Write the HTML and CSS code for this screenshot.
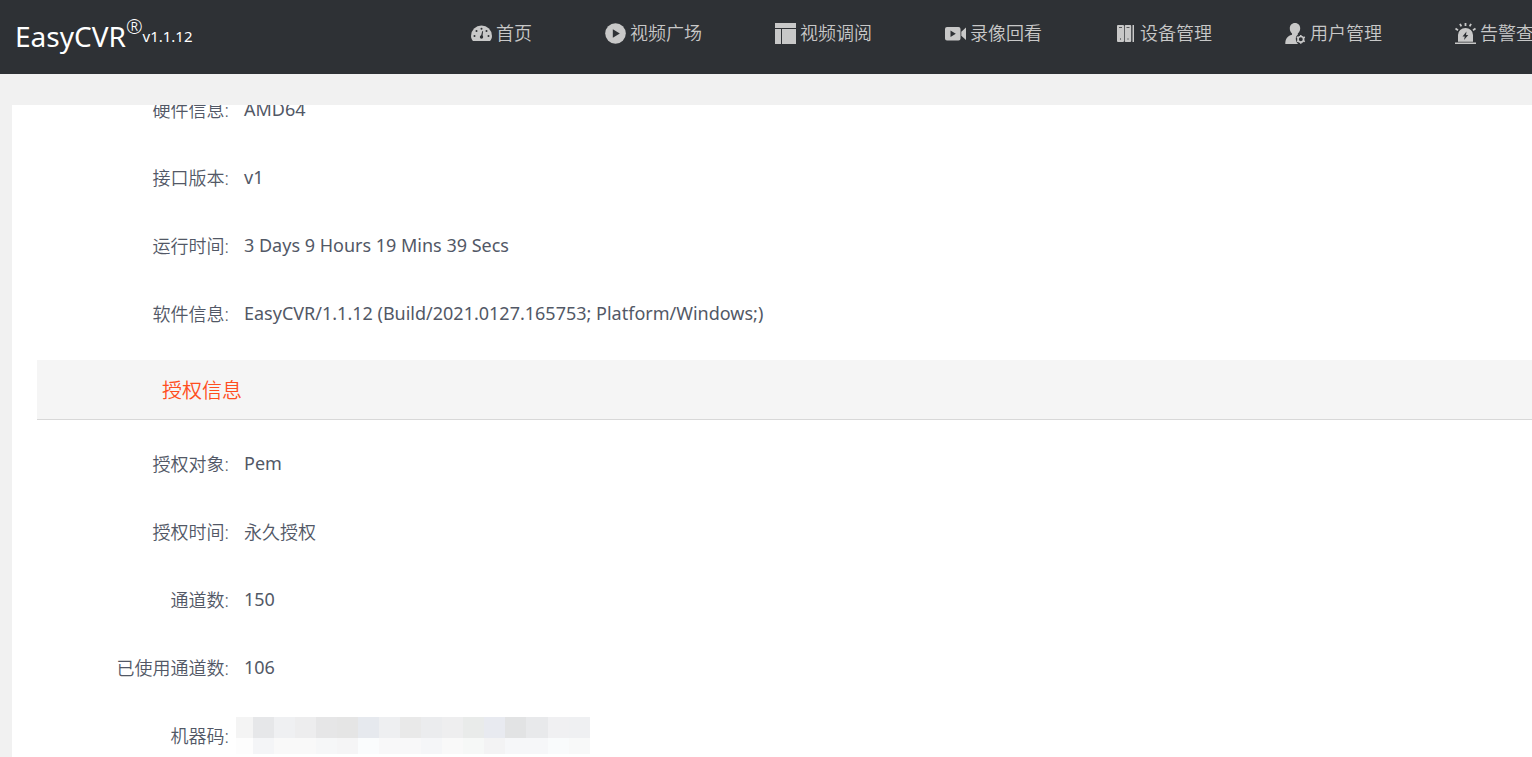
FILE: index.html
```html
<!DOCTYPE html>
<html lang="zh-CN">
<head>
<meta charset="utf-8">
<title>EasyCVR</title>
<link rel="stylesheet" href="styles.css">
</head>
<body>
<header class="topbar">
  <a class="logo" href="#"><span class="logo-name">EasyCVR</span><span class="logo-mark">®</span><span class="logo-version">v1.1.12</span></a>
  <nav class="nav">
    <a class="nav-item" href="#">
      <svg class="icon" viewBox="0 0 21 21"><path fill="currentColor" d="M2 18C.8 16.700 0 15 0 13a10.500 10.500 0 0 1 21 0c0 2-.8 3.700-2 5z"/><g fill="#2e3135"><circle cx="3.500" cy="13" r="1"/><circle cx="5.500" cy="8" r="1"/><circle cx="10.500" cy="5.800" r="1"/><circle cx="15.500" cy="8" r="1"/><circle cx="17.500" cy="13" r="1"/><circle cx="10.500" cy="14" r="1.700"/><path d="M10 13l1.300-5 .8.200-.6 5z"/></g></svg>
      <span>首页</span></a>
    <a class="nav-item" href="#">
      <svg class="icon" viewBox="0 0 21 21"><circle cx="10.500" cy="10.500" r="10.300" fill="currentColor"/><path fill="#2e3135" d="M7.800 6.300v8.400l7-4.200z"/></svg>
      <span>视频广场</span></a>
    <a class="nav-item" href="#">
      <svg class="icon" viewBox="0 0 21 21"><path fill="currentColor" d="M0 0h21v5H0zM0 6h6v15H0zM7 6h14v15H7z"/></svg>
      <span>视频调阅</span></a>
    <a class="nav-item" href="#">
      <svg class="icon" viewBox="0 0 21 21"><path fill="currentColor" d="M2 4h11.500a2 2 0 0 1 2 2v9.500a2 2 0 0 1-2 2H2a2 2 0 0 1-2-2V6a2 2 0 0 1 2-2zM16.300 8.800L21 4.500v12.500l-4.700-4.300z"/><path fill="#2e3135" d="M5.500 7.500v6.500l5.300-3.200z"/></svg>
      <span>录像回看</span></a>
    <a class="nav-item" href="#">
      <svg class="icon" viewBox="0 0 21 21"><path fill="currentColor" d="M2 3a1 1 0 0 1 1-1h5a1 1 0 0 1 1 1v15a1 1 0 0 1-1 1H3a1 1 0 0 1-1-1zM9.700 3a1 1 0 0 1 1-1h4.500a1 1 0 0 1 1 1v15a1 1 0 0 1-1 1h-4.500a1 1 0 0 1-1-1zM17.500 2H19v17h-1.500z"/><path fill="#2e3135" d="M4 4h3v.8H4zM11.500 4h3v.8h-3zM5 15.500h1v1H5zM12.500 15.500h1v1h-1z"/></svg>
      <span>设备管理</span></a>
    <a class="nav-item" href="#">
      <svg class="icon" viewBox="0 0 21 21"><path fill="currentColor" d="M10 0c3.200 0 5.200 2.300 5.200 5.300 0 2.300-1 4.200-2.400 5.200v1.200c-1.300 1-2 2.200-2 4 0 2.300.8 3.800 2.400 5.300H.3c0-5 1.800-7.800 6.700-9.200v-1.300C5.600 9.500 4.800 7.600 4.800 5.300 4.800 2.300 6.800 0 10 0z"/><circle cx="15.800" cy="16.300" r="2.800" fill="none" stroke="currentColor" stroke-width="1.700"/><path stroke="currentColor" stroke-width="1.500" d="M15.800 11.900v1.500M15.800 19.300v1.500M11.900 14l1.300.8M18.500 17.800l1.300.8M11.900 18.600l1.300-.8M18.500 14.800l1.300-.8"/></svg>
      <span>用户管理</span></a>
    <a class="nav-item" href="#">
      <svg class="icon" viewBox="0 0 21 21"><path fill="currentColor" d="M0 19.500h21V21H0zM3 18.700V12a7.500 7 0 0 1 15 0v6.700z"/><path fill="#2e3135" d="M11.500 8.500l-4 5h2.300l-.8 3.500 4.300-5H11z"/><path stroke="currentColor" stroke-width="1.800" d="M10.500 0v3M5 .8l1.300 2.600M16 .8l-1.300 2.600M.5 5.500l2.500 1.700M20.500 5.500L18 7.200"/></svg>
      <span>告警查询</span></a>
  </nav>
</header>
<main class="panel">
  <dl class="info info-scrolled">
    <div class="row"><dt>硬件信息:</dt><dd>AMD64</dd></div>
    <div class="row"><dt>接口版本:</dt><dd>v1</dd></div>
    <div class="row"><dt>运行时间:</dt><dd>3 Days 9 Hours 19 Mins 39 Secs</dd></div>
    <div class="row"><dt>软件信息:</dt><dd>EasyCVR/1.1.12 (Build/2021.0127.165753; Platform/Windows;)</dd></div>
  </dl>
  <h2 class="section-title">授权信息</h2>
  <dl class="info">
    <div class="row"><dt>授权对象:</dt><dd>Pem</dd></div>
    <div class="row"><dt>授权时间:</dt><dd class="han">永久授权</dd></div>
    <div class="row"><dt>通道数:</dt><dd>150</dd></div>
    <div class="row"><dt>已使用通道数:</dt><dd>106</dd></div>
    <div class="row"><dt>机器码:</dt><dd class="masked">
      <svg class="mosaic" viewBox="0 0 354 37" shape-rendering="crispEdges" aria-hidden="true">
        <path fill="#f4f4f4" d="M0 0h17v21H0z"/><path fill="#e6e7e9" d="M17 0h21v21H17z"/><path fill="#eff0f2" d="M38 0h21v21H38z"/><path fill="#ededee" d="M59 0h21v21H59z"/><path fill="#e6e6e7" d="M80 0h21v21H80z"/><path fill="#e5e5e5" d="M101 0h21v21h-21z"/><path fill="#e6e9ee" d="M122 0h21v21h-21z"/><path fill="#eeeff1" d="M143 0h21v21h-21z"/><path fill="#e9e9e9" d="M164 0h21v21h-21z"/><path fill="#ebecee" d="M185 0h21v21h-21z"/><path fill="#eeeeef" d="M206 0h21v21h-21z"/><path fill="#e9ebea" d="M227 0h21v21h-21z"/><path fill="#e8eaf0" d="M248 0h21v21h-21z"/><path fill="#e2e3e4" d="M269 0h21v21h-21z"/><path fill="#e8e9eb" d="M290 0h22v21h-22z"/><path fill="#f0f0f2" d="M312 0h21v21h-21z"/><path fill="#eff0f2" d="M333 0h21v21h-21z"/>
        <path fill="#fdfdfd" d="M0 21h17v16H0z"/><path fill="#f4f5f7" d="M17 21h21v16H17z"/><path fill="#f9f9f9" d="M38 21h42v16H38z"/><path fill="#f6f7f8" d="M80 21h21v16H80z"/><path fill="#f5f5f6" d="M101 21h21v16h-21z"/><path fill="#fafcfd" d="M122 21h21v16h-21z"/><path fill="#f8f8f9" d="M143 21h42v16h-42z"/><path fill="#f5f6f8" d="M185 21h21v16h-21z"/><path fill="#f9f9f9" d="M206 21h21v16h-21z"/><path fill="#f6f8f7" d="M227 21h21v16h-21z"/><path fill="#f3f3f4" d="M248 21h21v16h-21z"/><path fill="#f6f7f9" d="M269 21h43v16h-43z"/><path fill="#f9fbfc" d="M312 21h21v16h-21z"/><path fill="#f8f9f9" d="M333 21h21v16h-21z"/>
      </svg></dd></div>
  </dl>
</main>
</body>
</html>
```
FILE: styles.css
```css
* {
  box-sizing: border-box;
}

body {
  margin: 0;
  height: 100vh;
  overflow: hidden;
  display: flex;
  flex-direction: column;
  background: #f1f1f1;
  color: #525866;
  font-family: "Noto Sans", "Noto Sans CJK SC", sans-serif;
  font-size: 18px;
  font-weight: 350;
}

.topbar {
  flex: none;
  display: flex;
  align-items: flex-start;
  height: 74px;
  padding-left: 15px;
  background: #2e3135;
}

.logo {
  flex: none;
  width: 456px;
  color: #fff;
  text-decoration: none;
  display: flex;
  align-items: baseline;
  line-height: 40px;
  padding-top: 16px;
}

.logo-name {
  font-size: 28px;
  font-weight: 400;
}

.logo-mark {
  font-size: 20px;
  line-height: 22px;
  align-self: flex-start;
}

.logo-version {
  font-size: 15px;
  font-weight: 400;
  line-height: 32px;
  align-self: flex-start;
  padding-top: 4px;
}

.nav {
  flex: none;
  display: flex;
  gap: 73px;
  padding-top: 20px;
}

.nav-item {
  display: flex;
  align-items: center;
  gap: 4px;
  line-height: 26px;
  color: #c8c8c8;
  text-decoration: none;
  white-space: nowrap;
  font-family: "Noto Sans CJK SC", sans-serif;
}

.nav-item span {
  line-height: 24px;
  padding-bottom: 2px;
}

.icon {
  width: 21px;
  height: 21px;
}

.panel {
  flex: 1;
  min-height: 0;
  overflow: hidden;
  margin: 31px 0 0 12px;
  padding-left: 25px;
  background: #fff;
}

.info {
  margin: 9px 0 0;
}

.info-scrolled {
  margin: -30px 0 13px;
}

.row {
  display: flex;
  align-items: center;
  gap: 15px;
  height: 68px;
}

dt {
  width: 192px;
  text-align: right;
}

dd {
  margin: 0;
  font-weight: 400;
}

.han {
  font-weight: 350;
}

.masked {
  margin-left: -8px;
}

.mosaic {
  display: block;
  width: 354px;
  height: 37px;
}

.section-title {
  margin: 0;
  padding: 2px 0 0 125px;
  height: 60px;
  line-height: 58px;
  background: #f5f5f5;
  border-bottom: 1px solid #d8d8d8;
  color: #ff4d20;
  font-size: 20px;
  font-weight: 350;
}
```
